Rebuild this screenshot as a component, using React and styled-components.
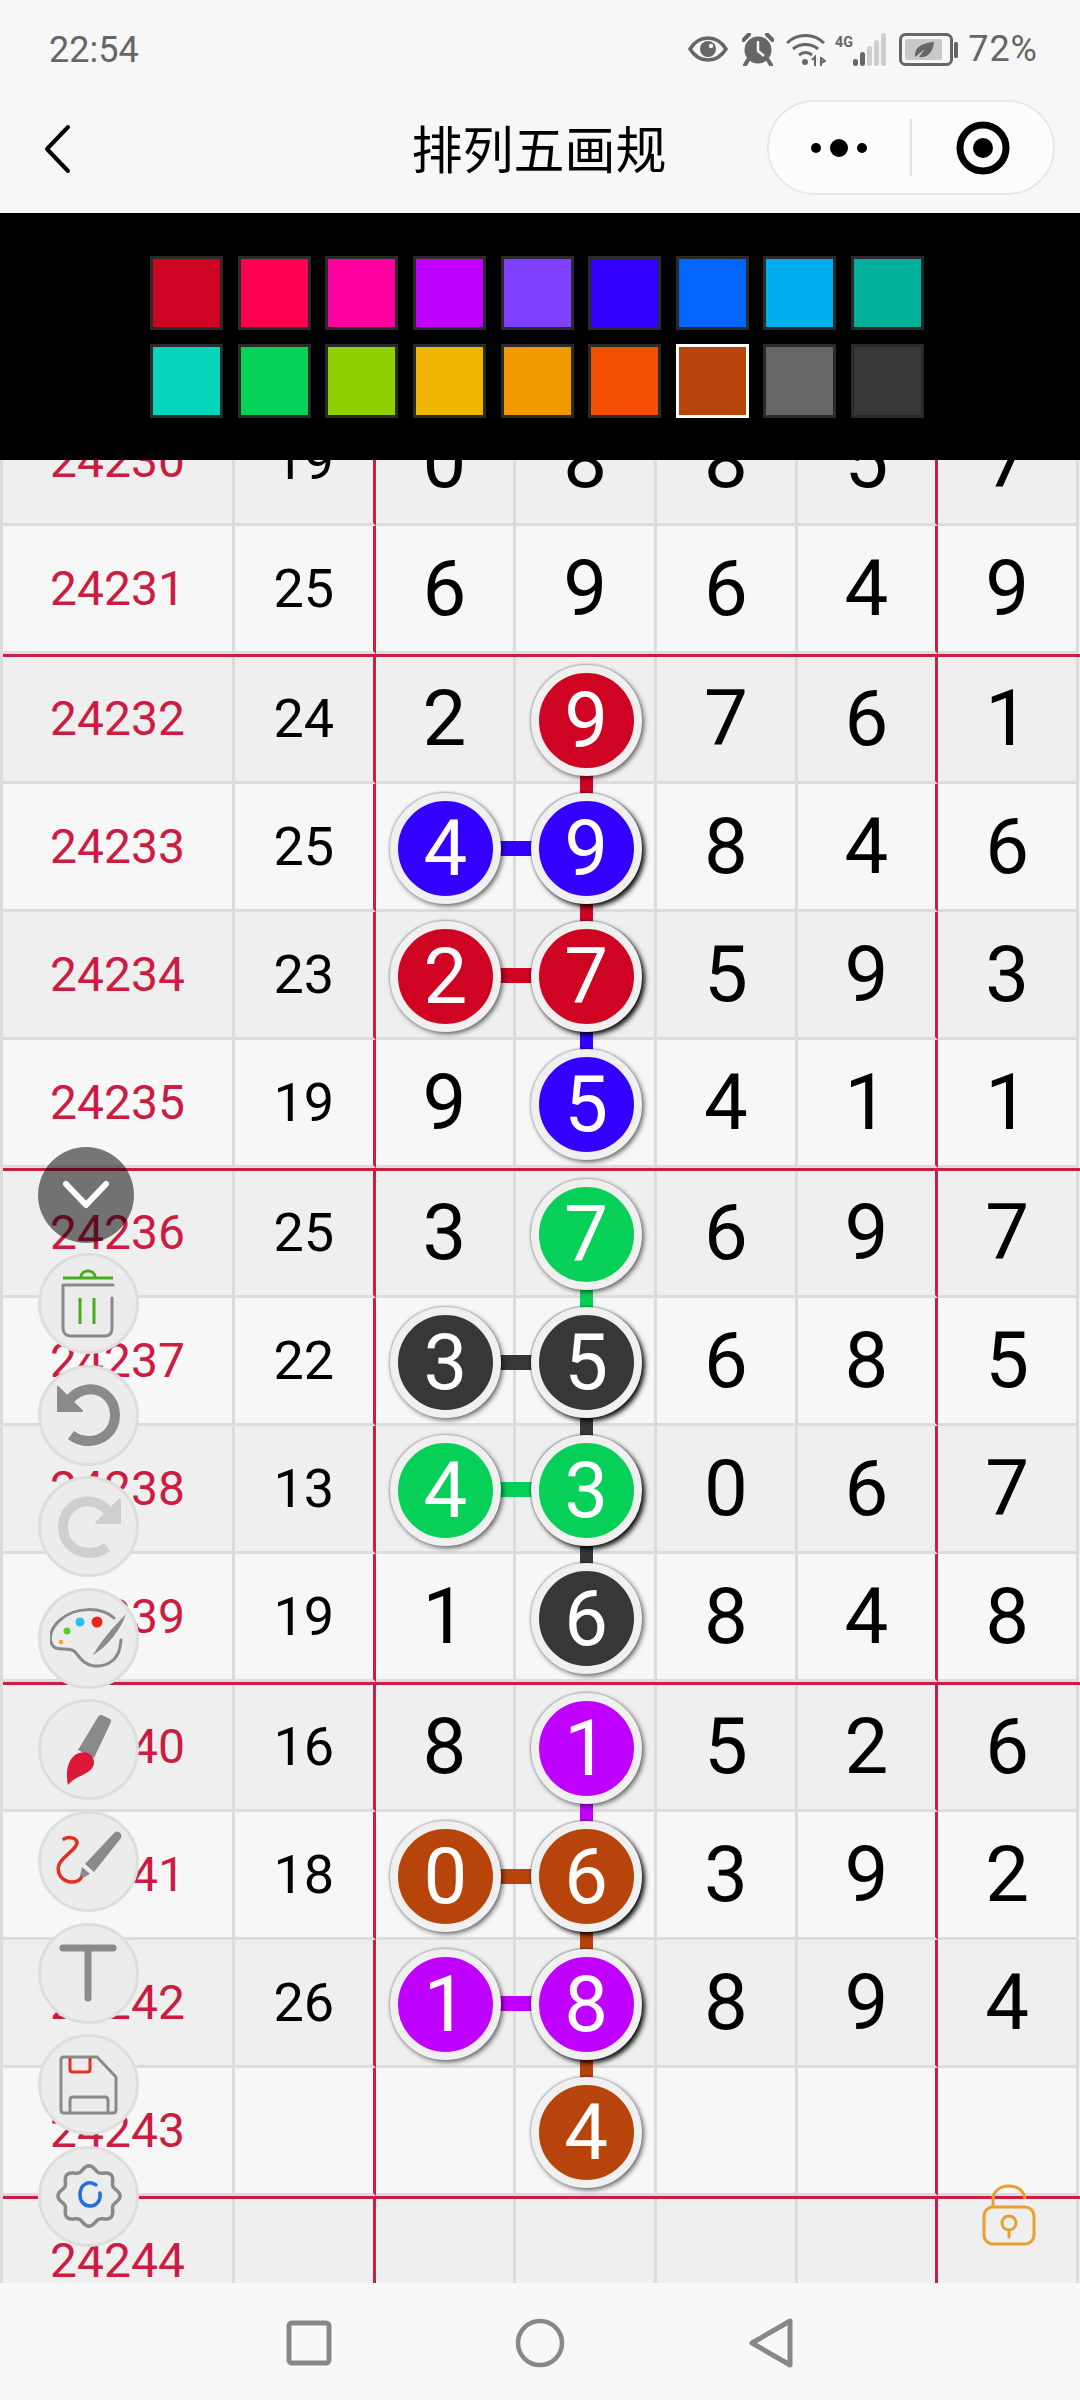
import React from 'react';
import styled, { createGlobalStyle } from 'styled-components';

const Global = createGlobalStyle`
  html, body { margin: 0; padding: 0; background: #f7f7f7; }
  body { font-family: Roboto, "Liberation Sans", sans-serif; }
  #root { width: 1080px; height: 2400px; overflow: hidden; }
`;

const Page = styled.div`
  position: relative;
  width: 1080px;
  height: 2400px;
  display: flex;
  flex-direction: column;
  background: #f7f7f7;
  overflow: hidden;
`;

const Top = styled.header`
  height: 213px;
  flex: none;
  display: flex;
  flex-direction: column;
  background: #f7f7f7;
`;

const StatusBar = styled.div`
  height: 100px;
  display: flex;
  align-items: center;
  justify-content: space-between;
  padding: 0 42px 0 49px;
  color: #666;
  font-family: Roboto, sans-serif;
  font-size: 36px;
  box-sizing: border-box;
`;

const StatusIcons = styled.div`
  display: flex;
  align-items: center;
  margin-top: -2px;
`;

const Battery = styled.span`
  margin-left: 9px;
  letter-spacing: 1px;
`;

const NavBar = styled.div`
  position: relative;
  height: 113px;
  padding-bottom: 18px;
  box-sizing: border-box;
  display: flex;
  align-items: center;
  justify-content: center;
`;

const Title = styled.h1`
  margin: 0 0 0 -2px;
  font: 400 51px "Noto Sans CJK SC", sans-serif;
  color: #000;
  line-height: 1;
`;

const BackIcon = styled.svg`
  position: absolute;
  left: 44px;
  top: 24px;
`;

const Capsule = styled.div`
  position: absolute;
  left: 767px;
  top: 0;
  width: 288px;
  height: 95px;
  box-sizing: border-box;
  border: 2px solid #e8e8e8;
  border-radius: 48px;
  background: #fcfcfc;
  display: flex;
  align-items: center;
`;

const CapsuleSide = styled.div`
  flex: 1;
  display: flex;
  align-items: center;
  justify-content: center;
`;

const CapsuleDivider = styled.div`
  width: 2px;
  height: 57px;
  background: #e2e2e2;
`;

const Palette = styled.div`
  height: 247px;
  flex: none;
  background: #000;
  display: grid;
  grid-template-columns: repeat(9, 73px);
  grid-template-rows: 74px 74px;
  column-gap: 14.6px;
  row-gap: 14px;
  align-content: center;
  justify-content: center;
  position: relative;
  z-index: 3;
  padding-right: 6px;
  box-sizing: border-box;
`;

const Swatch = styled.div`
  box-sizing: border-box;
  background: ${p => p.$color};
  border: 3px solid ${p => (p.$on ? '#fff' : '#2a2a2a')};
`;

const Viewport = styled.main`
  height: 1823px;
  flex: none;
  overflow: hidden;
  box-sizing: border-box;
  border-left: 3px solid #dcdcdc;
`;

const Sheet = styled.div`
  margin-top: -62px;
`;

const Row = styled.div`
  display: grid;
  grid-template-columns: 232px repeat(6, 140.67px);
  height: 127.75px;
  background: ${p => (p.$alt ? '#efefef' : '#f7f7f7')};
`;

const RedRule = styled.div`
  height: 3px;
  background: #c91f42;
`;

const Cell = styled.div`
  position: relative;
  box-sizing: border-box;
  display: flex;
  align-items: center;
  justify-content: center;
  border-bottom: 3px solid #dcdcdc;
  border-right: 3px solid ${p => (p.$red ? '#c91f42' : '#dcdcdc')};
  font-family: Roboto, sans-serif;
  font-weight: 400;
  color: #000;
`;

const IssueCell = styled(Cell)`
  font-size: 48px;
  color: #cb1c42;
`;

const SumCell = styled(Cell)`
  font-size: 54px;
`;

const DigitCell = styled(Cell)`
  font-size: 78px;
`;

const Ball = styled.div`
  position: absolute;
  left: 50%;
  top: 50%;
  width: 111px;
  height: 111px;
  margin: -53.5px 0 0 -54.5px;
  box-sizing: border-box;
  border-radius: 50%;
  border: 8px solid #f0f0f0;
  background: ${p => p.$color};
  color: #fff;
  display: flex;
  align-items: center;
  justify-content: center;
  box-shadow: ${p =>
    p.$deep
      ? '3px 3px 5px rgba(0, 0, 0, 0.95), -1px -1px 2px rgba(0, 0, 0, 0.3)'
      : '2px 2px 5px rgba(0, 0, 0, 0.6), -1px -1px 2px rgba(0, 0, 0, 0.2)'};
  z-index: 2;
`;

const LinkDown = styled.div`
  position: absolute;
  left: 50%;
  top: 50%;
  width: 13px;
  height: 128px;
  margin-left: -5px;
  background: ${p => p.$color};
  z-index: 1;
`;

const LinkLeft = styled.div`
  position: absolute;
  right: 50%;
  top: 50%;
  height: 15px;
  width: 140px;
  margin-top: -6px;
  background: ${p => p.$color};
  z-index: 1;
`;

const Floaters = styled.aside`
  position: absolute;
  left: 38px;
  top: 1147px;
  width: 101px;
  display: flex;
  flex-direction: column;
  z-index: 4;
`;

const Toggle = styled.div`
  width: 96px;
  height: 96px;
  border-radius: 50%;
  background: rgba(0, 0, 0, 0.52);
  display: flex;
  align-items: center;
  justify-content: center;
  margin-bottom: 10px;
`;

const ToolStack = styled.div`
  display: flex;
  flex-direction: column;
  gap: 10.6px;
`;

const Tool = styled.div`
  width: 101px;
  height: 101px;
  box-sizing: border-box;
  border-radius: 50%;
  background: #ececec;
  border: 3px solid #dedede;
  display: flex;
  align-items: center;
  justify-content: center;
`;

const Lock = styled.svg`
  position: absolute;
  left: 981px;
  top: 2183px;
  z-index: 2;
`;

const BottomNav = styled.nav`
  flex: 1;
  background: #f8f8f8;
  position: relative;
  z-index: 3;
  display: flex;
  align-items: center;
  justify-content: center;
`;

const NavSlot = styled.div`
  width: 231px;
  display: flex;
  justify-content: center;
  align-items: center;
  margin-top: 2px;
`;

const Gap = styled.span`
  width: ${p => p.$w}px;
`;

const C = {
  red: '#cf0322',
  blue: '#3300ff',
  green: '#06d058',
  dark: '#373737',
  purple: '#c000ff',
  brown: '#b7440b',
};

const swatches = [
  '#cf0322', '#ff0050', '#ff00a0', '#c000ff', '#8040ff', '#3300ff', '#0066ff', '#00aeef', '#00b09a',
  '#06d5bd', '#06d058', '#8ed000', '#eeb505', '#f29900', '#f25000', '#b7440b', '#666666', '#373737',
];

const rows = [
  { n: 24230, s: 19, d: [0, 8, 8, 5, 7] },
  { n: 24231, s: 25, d: [6, 9, 6, 4, 9], rule: true },
  { n: 24232, s: 24, d: [2, 9, 7, 6, 1], b: { 1: C.red }, down: C.red },
  { n: 24233, s: 25, d: [4, 9, 8, 4, 6], b: { 0: C.blue, 1: C.blue }, left: C.blue, down: C.red },
  { n: 24234, s: 23, d: [2, 7, 5, 9, 3], b: { 0: C.red, 1: C.red }, left: C.red, down: C.blue },
  { n: 24235, s: 19, d: [9, 5, 4, 1, 1], b: { 1: C.blue }, rule: true },
  { n: 24236, s: 25, d: [3, 7, 6, 9, 7], b: { 1: C.green }, down: C.green },
  { n: 24237, s: 22, d: [3, 5, 6, 8, 5], b: { 0: C.dark, 1: C.dark }, left: C.dark, down: C.dark },
  { n: 24238, s: 13, d: [4, 3, 0, 6, 7], b: { 0: C.green, 1: C.green }, left: C.green, down: C.dark },
  { n: 24239, s: 19, d: [1, 6, 8, 4, 8], b: { 1: C.dark }, rule: true },
  { n: 24240, s: 16, d: [8, 1, 5, 2, 6], b: { 1: C.purple }, down: C.purple },
  { n: 24241, s: 18, d: [0, 6, 3, 9, 2], b: { 0: C.brown, 1: C.brown }, left: C.brown, down: C.brown },
  { n: 24242, s: 26, d: [1, 8, 8, 9, 4], b: { 0: C.purple, 1: C.purple }, left: C.purple, down: C.brown },
  { n: 24243, s: '', d: ['', 4, '', '', ''], b: { 1: C.brown }, rule: true },
  { n: 24244, s: '', d: ['', '', '', '', ''] },
];

const gearPath = (() => {
  const pts = [];
  for (let i = 0; i < 96; i += 1) {
    const a = (i / 96) * Math.PI * 2;
    const r = 28.5 + 2.6 * Math.cos(8 * a);
    pts.push(`${(33 + r * Math.cos(a)).toFixed(2)} ${(32 + r * Math.sin(a) * 0.97).toFixed(2)}`);
  }
  return `M${pts.join('L')}Z`;
})();

const Eye = () => (
  <svg width="40" height="26" viewBox="0 0 40 26" fill="none">
    <path d="M2 13C7 5 13 2 20 2s13 3 18 11c-5 8-11 11-18 11S7 21 2 13Z" stroke="#666" strokeWidth="3.5" />
    <circle cx="20" cy="13" r="8" fill="#666" />
    <circle cx="23" cy="10" r="2.2" fill="#f7f7f7" />
  </svg>
);

const Alarm = () => (
  <svg width="32" height="33" viewBox="0 0 32 33">
    <circle cx="16" cy="17" r="13.500" fill="#666" />
    <path d="M1.500 7 7 1.500M30.500 7 25 1.500M6 27l-3 5M26 27l3 5" stroke="#666" strokeWidth="4" strokeLinecap="round" />
    <path d="M16 8v10l6 5" stroke="#f7f7f7" strokeWidth="2.500" fill="none" />
  </svg>
);

const Wifi = () => (
  <svg width="40" height="33" viewBox="0 0 40 33" fill="none" stroke="#666" strokeWidth="3">
    <path d="M1 10C11 0 28 0 38 10" />
    <path d="M7 16c7-6 18-6 25 0" />
    <path d="M13 22c4-3 9-3 13 0" />
    <circle cx="19" cy="29" r="3" fill="#666" stroke="none" />
    <path d="M29 33v-9l-3 3M35 24v9M35 25l4 3-4 2" strokeWidth="2" />
  </svg>
);

const Signal = () => (
  <svg width="54" height="33" viewBox="0 0 54 33">
    <text x="0" y="14" fontFamily="Roboto, sans-serif" fontWeight="700" fontSize="15" fill="#666" textLength="18" lengthAdjust="spacingAndGlyphs">4G</text>
    <rect x="18" y="26" width="5" height="7" rx="2.500" fill="#666" />
    <rect x="25" y="19" width="5" height="14" rx="2.500" fill="#666" />
    <rect x="32" y="13" width="5" height="20" rx="2.500" fill="#cfcfcf" />
    <rect x="39" y="7" width="5" height="26" rx="2.500" fill="#cfcfcf" />
    <rect x="46" y="0" width="5" height="33" rx="2.500" fill="#cfcfcf" />
  </svg>
);

const BatteryIcon = () => (
  <svg width="60" height="33" viewBox="0 0 60 33" fill="none">
    <rect x="1.500" y="1.500" width="51" height="30" rx="5" stroke="#666" strokeWidth="3" />
    <rect x="6" y="6" width="37" height="21" rx="2" fill="#c8c8c8" />
    <path d="M16 24c-1-9 6-14 19-15-1 11-7 16-15 15l6-8-10 8Z" fill="#666" />
    <rect x="55" y="9" width="4" height="16" rx="1.500" fill="#666" />
  </svg>
);

const Chevron = () => (
  <svg width="46" height="30" viewBox="0 0 46 30" fill="none" stroke="#fff" strokeWidth="6" strokeLinecap="round" strokeLinejoin="round">
    <path d="M3 4 23 25 43 4" />
  </svg>
);

const Trash = () => (
  <svg width="56" height="70" viewBox="0 0 56 70" fill="none">
    <path d="M2 9h50" stroke="#43b01a" strokeWidth="3" />
    <path d="M20 8c0-8 14-8 14 0" stroke="#43b01a" strokeWidth="3" />
    <path d="M2 16h50M2 16v43c0 5 3 8 8 8h34c5 0 7-3 7-8V29" stroke="#8a8a8a" strokeWidth="3" strokeLinecap="round" />
    <path d="M19 29v26M33 29v26" stroke="#43b01a" strokeWidth="3" />
  </svg>
);

const Undo = ({ color = '#8a8a8a', flip }) => (
  <svg width="64" height="64" viewBox="0 0 64 64" fill="none" style={flip ? { transform: 'scaleX(-1)' } : undefined}>
    <path d="M13 16C23 5 38 3 49 12c12 10 12 30 0 40-10 8-25 8-35 0" stroke={color} strokeWidth="10" />
    <path d="M1 4v24h24L1 4Z" fill={color} stroke={color} strokeLinejoin="round" strokeWidth="2" />
  </svg>
);

const PaletteIcon = () => (
  <svg width="78" height="62" viewBox="0 0 78 62" fill="none">
    <path d="M64 11C52 0 26-1 10 13-1 23-2 34 4 40c5 4 14 0 20 4 5 4 7 13 20 15 14 1 24-7 26-19 0-2 1-5 1-7" stroke="#8a8a8a" strokeWidth="3" strokeLinecap="round" />
    <path d="M43 48c8-14 20-28 33-41-5 15-18 32-33 41Z" fill="#8a8a8a" />
    <circle cx="47" cy="15" r="5.500" fill="#e8261c" />
    <circle cx="30" cy="15" r="4.500" fill="#29bdf0" />
    <circle cx="17" cy="24" r="3.500" fill="#53d026" />
    <circle cx="11" cy="35" r="2.200" fill="#f4a31d" />
  </svg>
);

const Brush = () => (
  <svg width="46" height="72" viewBox="0 0 46 72" fill="none">
    <path d="M36 1 44 5c1 1 1 2 1 3L28 44 12 36 32 3c1-2 3-2 4-2Z" fill="#8a8a8a" />
    <path d="M9 41c8-5 17-3 19 6 1 9-8 12-13 15-3 1-8 3-13 9-2-9-2-23 7-30Z" fill="#dc1838" />
  </svg>
);

const Pen = () => (
  <svg width="68" height="62" viewBox="0 0 68 62" fill="none">
    <path d="M60 2c3-2 8 2 6 6L39 42l-9-8L60 2Z" fill="#8a8a8a" />
    <path d="M27 37l8 7-11 6 3-13Z" fill="#8a8a8a" />
    <path d="M9 9c5-3 12-1 13 3 1 7-15 14-18 23-3 9 4 17 13 17 4 0 7-1 9-4" stroke="#dd3320" strokeWidth="3.500" strokeLinecap="round" />
  </svg>
);

const TIcon = () => (
  <svg width="60" height="58" viewBox="0 0 60 58" fill="none" stroke="#8a8a8a" strokeWidth="7" strokeLinecap="round">
    <path d="M4 4h50M29 4v50" />
  </svg>
);

const Floppy = () => (
  <svg width="60" height="60" viewBox="0 0 60 60" fill="none">
    <path d="M2 5c0-2 1-3 3-3h33l19 20v33c0 2-1 3-3 3H5c-2 0-3-1-3-3V5Z" stroke="#8a8a8a" strokeWidth="3" />
    <path d="M11 3v11c0 2 1 3 3 3h14c2 0 3-1 3-3V3" stroke="#dd3320" strokeWidth="3" />
    <path d="M11 57V45c0-2 1-3 3-3h32c2 0 3 1 3 3v12" stroke="#8a8a8a" strokeWidth="3" />
  </svg>
);

const Gear = () => (
  <svg width="66" height="64" viewBox="0 0 66 64" fill="none">
    <path d={gearPath} stroke="#8a8a8a" strokeWidth="3.500" strokeLinejoin="round" />
    <path d="M40 21c-7-5-16-1-16 10 0 6 4 11 10 11 7 0 11-6 10-13" stroke="#1f6fe5" strokeWidth="3.500" strokeLinecap="round" />
  </svg>
);

export default function App() {
  return (
    <Page>
      <Global />
      <Top>
        <StatusBar>
          <span>22:54</span>
          <StatusIcons>
            <Eye />
            <Gap $w={14} />
            <Alarm />
            <Gap $w={12} />
            <Wifi />
            <Gap $w={9} />
            <Signal />
            <Gap $w={10} />
            <BatteryIcon />
            <Battery>72%</Battery>
          </StatusIcons>
        </StatusBar>
        <NavBar>
          <BackIcon width="28" height="50" viewBox="0 0 28 50" fill="none" stroke="#000" strokeWidth="4" strokeLinecap="round" strokeLinejoin="round">
            <path d="M24 3 3 25l21 22" />
          </BackIcon>
          <Title>排列五画规</Title>
          <Capsule>
            <CapsuleSide>
              <svg width="58" height="20" viewBox="0 0 58 20" fill="#000">
                <circle cx="5" cy="10" r="5" />
                <circle cx="28" cy="10" r="9" />
                <circle cx="51" cy="10" r="5" />
              </svg>
            </CapsuleSide>
            <CapsuleDivider />
            <CapsuleSide>
              <svg width="54" height="54" viewBox="0 0 54 54">
                <circle cx="27" cy="27" r="23" fill="none" stroke="#000" strokeWidth="7" />
                <circle cx="27" cy="27" r="10" fill="#000" />
              </svg>
            </CapsuleSide>
          </Capsule>
        </NavBar>
      </Top>
      <Palette>
        {swatches.map((c, i) => (
          <Swatch key={i} $color={c} $on={i === 15} />
        ))}
      </Palette>
      <Viewport>
        <Sheet>
          {rows.map((r, i) => (
            <React.Fragment key={r.n}>
              <Row $alt={i % 2 === 0}>
                <IssueCell>{r.n}</IssueCell>
                <SumCell $red>{r.s}</SumCell>
                {r.d.map((d, j) => {
                  const ball = r.b && r.b[j];
                  return (
                    <DigitCell key={j} $red={j === 3}>
                      {ball ? (
                        <>
                          <Ball $color={ball} $deep={j === 1 && !!r.left}>{d}</Ball>
                          {j === 1 && r.down && <LinkDown $color={r.down} />}
                          {j === 1 && r.left && <LinkLeft $color={r.left} />}
                        </>
                      ) : (
                        d
                      )}
                    </DigitCell>
                  );
                })}
              </Row>
              {r.rule && <RedRule />}
            </React.Fragment>
          ))}
        </Sheet>
      </Viewport>
      <BottomNav>
        <NavSlot>
          <svg width="46" height="46" viewBox="0 0 46 46" fill="none" stroke="#888" strokeWidth="5">
            <rect x="3" y="3" width="40" height="40" rx="3" />
          </svg>
        </NavSlot>
        <NavSlot>
          <svg width="50" height="50" viewBox="0 0 50 50" fill="none" stroke="#888" strokeWidth="4.500">
            <circle cx="25" cy="25" r="22" />
          </svg>
        </NavSlot>
        <NavSlot>
          <svg width="44" height="50" viewBox="0 0 44 50" fill="none" stroke="#888" strokeWidth="5" strokeLinejoin="round">
            <path d="M41 3v44L3 25 41 3Z" />
          </svg>
        </NavSlot>
      </BottomNav>
      <Floaters>
        <Toggle><Chevron /></Toggle>
        <ToolStack>
          <Tool><Trash /></Tool>
          <Tool><Undo /></Tool>
          <Tool><Undo color="#cfcfcf" flip /></Tool>
          <Tool><PaletteIcon /></Tool>
          <Tool><Brush /></Tool>
          <Tool><Pen /></Tool>
          <Tool><TIcon /></Tool>
          <Tool><Floppy /></Tool>
          <Tool><Gear /></Tool>
        </ToolStack>
      </Floaters>
      <Lock width="56" height="64" viewBox="0 0 56 64" fill="none" stroke="#e8a030" strokeWidth="3">
        <path d="M12 24V17C12 8 19 3 28 3s15 5 16 13" />
        <rect x="3" y="24" width="50" height="37" rx="9" />
        <circle cx="28" cy="40" r="7" />
        <path d="M28 47v7" strokeLinecap="round" />
      </Lock>
    </Page>
  );
}
